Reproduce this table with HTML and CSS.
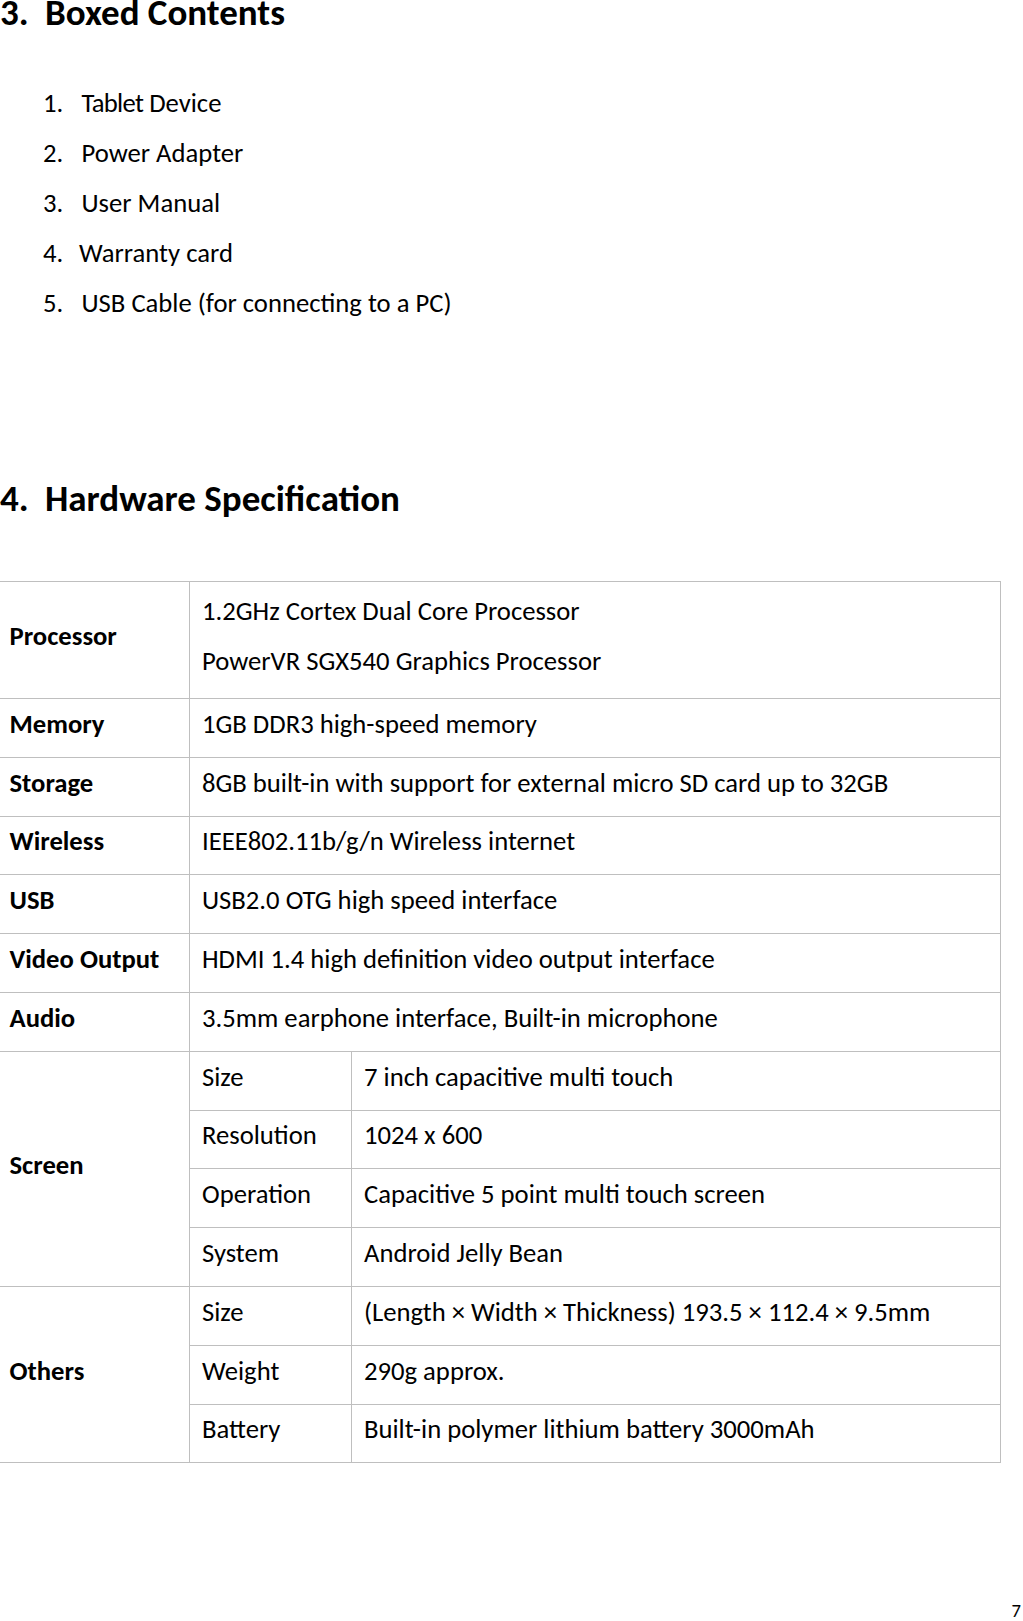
FILE: index.html
```html
<!DOCTYPE html>
<html>
<head>
<meta charset="utf-8">
<link rel="stylesheet" href="styles.css">
</head>
<body>
<div class="page">
  <h2 class="heading heading-boxed"><span class="num">3.</span><span>Boxed Contents</span></h2>
  <ol class="items">
    <li><span class="n">1.</span><span class="t"><span class="tight">Tablet</span> Device</span></li>
    <li><span class="n">2.</span><span class="t">Power Adapter</span></li>
    <li><span class="n">3.</span><span class="t">User Manual</span></li>
    <li><span class="n">4.</span><span class="t t4">Warranty card</span></li>
    <li><span class="n">5.</span><span class="t">USB Cable (for connecting to a PC)</span></li>
  </ol>
  <h2 class="heading heading-hw"><span class="num">4.</span><span>Hardware Specification</span></h2>
  <table class="spec">
    <colgroup><col class="c1"><col class="c2"><col class="c3"></colgroup>
    <tr class="r2"><th>Processor</th><td colspan="2"><div class="l">1.2GHz Cortex Dual Core Processor</div><div class="l">PowerVR SGX540 Graphics Processor</div></td></tr>
    <tr><th>Memory</th><td colspan="2">1GB DDR3 high-speed memory</td></tr>
    <tr><th>Storage</th><td colspan="2">8GB built-in with support for external micro SD card up to 32GB</td></tr>
    <tr><th>Wireless</th><td colspan="2">IEEE802.11b/g/n Wireless internet</td></tr>
    <tr><th>USB</th><td colspan="2">USB2.0 OTG high speed interface</td></tr>
    <tr><th>Video Output</th><td colspan="2">HDMI 1.4 high definition video output interface</td></tr>
    <tr><th>Audio</th><td colspan="2">3.5mm earphone interface, Built-in microphone</td></tr>
    <tr><th rowspan="4">Screen</th><td class="sub">Size</td><td>7 inch capacitive multi touch</td></tr>
    <tr><td class="sub">Resolution</td><td>1024 x 600</td></tr>
    <tr><td class="sub">Operation</td><td>Capacitive 5 point multi touch screen</td></tr>
    <tr><td class="sub">System</td><td>Android Jelly Bean</td></tr>
    <tr><th rowspan="3">Others</th><td class="sub">Size</td><td>(Length × Width × Thickness) 193.5 × 112.4 × 9.5mm</td></tr>
    <tr><td class="sub">Weight</td><td>290g approx.</td></tr>
    <tr><td class="sub">Battery</td><td>Built-in polymer lithium battery 3000mAh</td></tr>
  </table>
  <div class="pageno">7</div>
</div>
</body>
</html>
```
FILE: styles.css
```css
html, body {
  margin: 0;
  padding: 0;
  background: #ffffff;
}
.page {
  font-family: "Carlito", "Lato", sans-serif;
  color: #000;
  width: 1023px;
  overflow: hidden;
}
.heading {
  display: flex;
  margin: 0;
  font-size: 37px;
  font-weight: 700;
  line-height: 26px;
}
.heading .num {
  width: 45px;
}
.heading-hw {
  margin-top: 158px;
}
.items {
  list-style: none;
  margin: 52px 0 0 0;
  padding: 0 0 0 43px;
  font-size: 26.67px;
  line-height: 50px;
}
.items li {
  display: flex;
}
.items .n {
  width: 38.5px;
}
.items .t4 {
  margin-left: -2.5px;
}
.items .tight {
  letter-spacing: -0.7px;
}
.spec {
  border-collapse: collapse;
  table-layout: fixed;
  margin-top: 69px;
  width: 1000px;
  font-size: 26.67px;
}
.spec col.c1 { width: 189.5px; }
.spec col.c2 { width: 162px; }
.spec col.c3 { width: 648.5px; }
.spec th, .spec td {
  border: 1px solid #bfbfbf;
  height: 49.8px;
  padding: 0 0 8px 12px;
  text-align: left;
  vertical-align: middle;
  line-height: 30px;
}
.spec th {
  border-left: none;
  font-weight: 700;
  padding-left: 9.5px;
}
.spec .r2 td, .spec .r2 th {
  height: 108px;
}
.spec .l {
  line-height: 50px;
}
.pageno {
  text-align: right;
  font-size: 18.67px;
  line-height: 20px;
  padding-right: 2px;
  margin-top: 138px;
}
```
